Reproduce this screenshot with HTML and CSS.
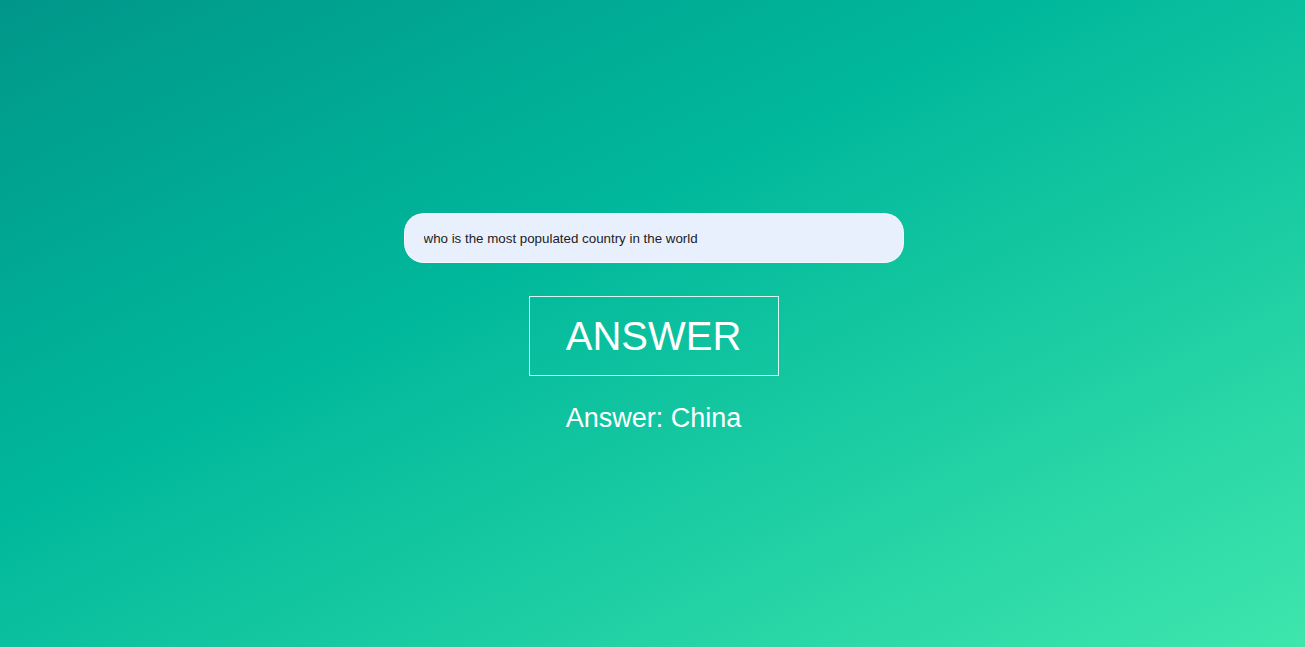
FILE: index.html
```html
<!DOCTYPE html>
<html lang="en">
<head>
<meta charset="utf-8">
<title>Answer</title>
<link rel="stylesheet" href="styles.css">
</head>
<body>
<main class="page">
  <input class="question" type="text" value="who is the most populated country in the world">
  <button class="answer-btn" type="button">ANSWER</button>
  <p class="result">Answer: China</p>
</main>
</body>
</html>
```
FILE: styles.css
```css
html, body {
  margin: 0;
  padding: 0;
  height: 100%;
}
body {
  font-family: "Liberation Sans", Arial, sans-serif;
  background: linear-gradient(to bottom right, #00978a 0%, #00b89b 40%, #3ee6ac 100%);
}
.page {
  box-sizing: border-box;
  height: 100vh;
  padding-left: 2px;
  display: flex;
  flex-direction: column;
  align-items: center;
  justify-content: center;
}
.question {
  box-sizing: border-box;
  width: 500px;
  height: 50px;
  border-radius: 20px;
  border: 1px solid rgba(255,255,255,0.6);
  background: #e8f0fe;
  padding: 0 19px;
  font-family: "Liberation Sans", Arial, sans-serif;
  font-size: 13.333px;
  color: #222;
  outline: none;
}
.answer-btn {
  box-sizing: border-box;
  margin-top: 33px;
  width: 250px;
  height: 80px;
  background: transparent;
  border: 1px solid rgba(255,255,255,0.85);
  color: #fff;
  font-family: "Liberation Sans", Arial, sans-serif;
  font-size: 40px;
  padding: 0;
}
.result {
  margin: 26px 0 0;
  color: #fff;
  font-size: 27px;
  line-height: 32px;
}
```
